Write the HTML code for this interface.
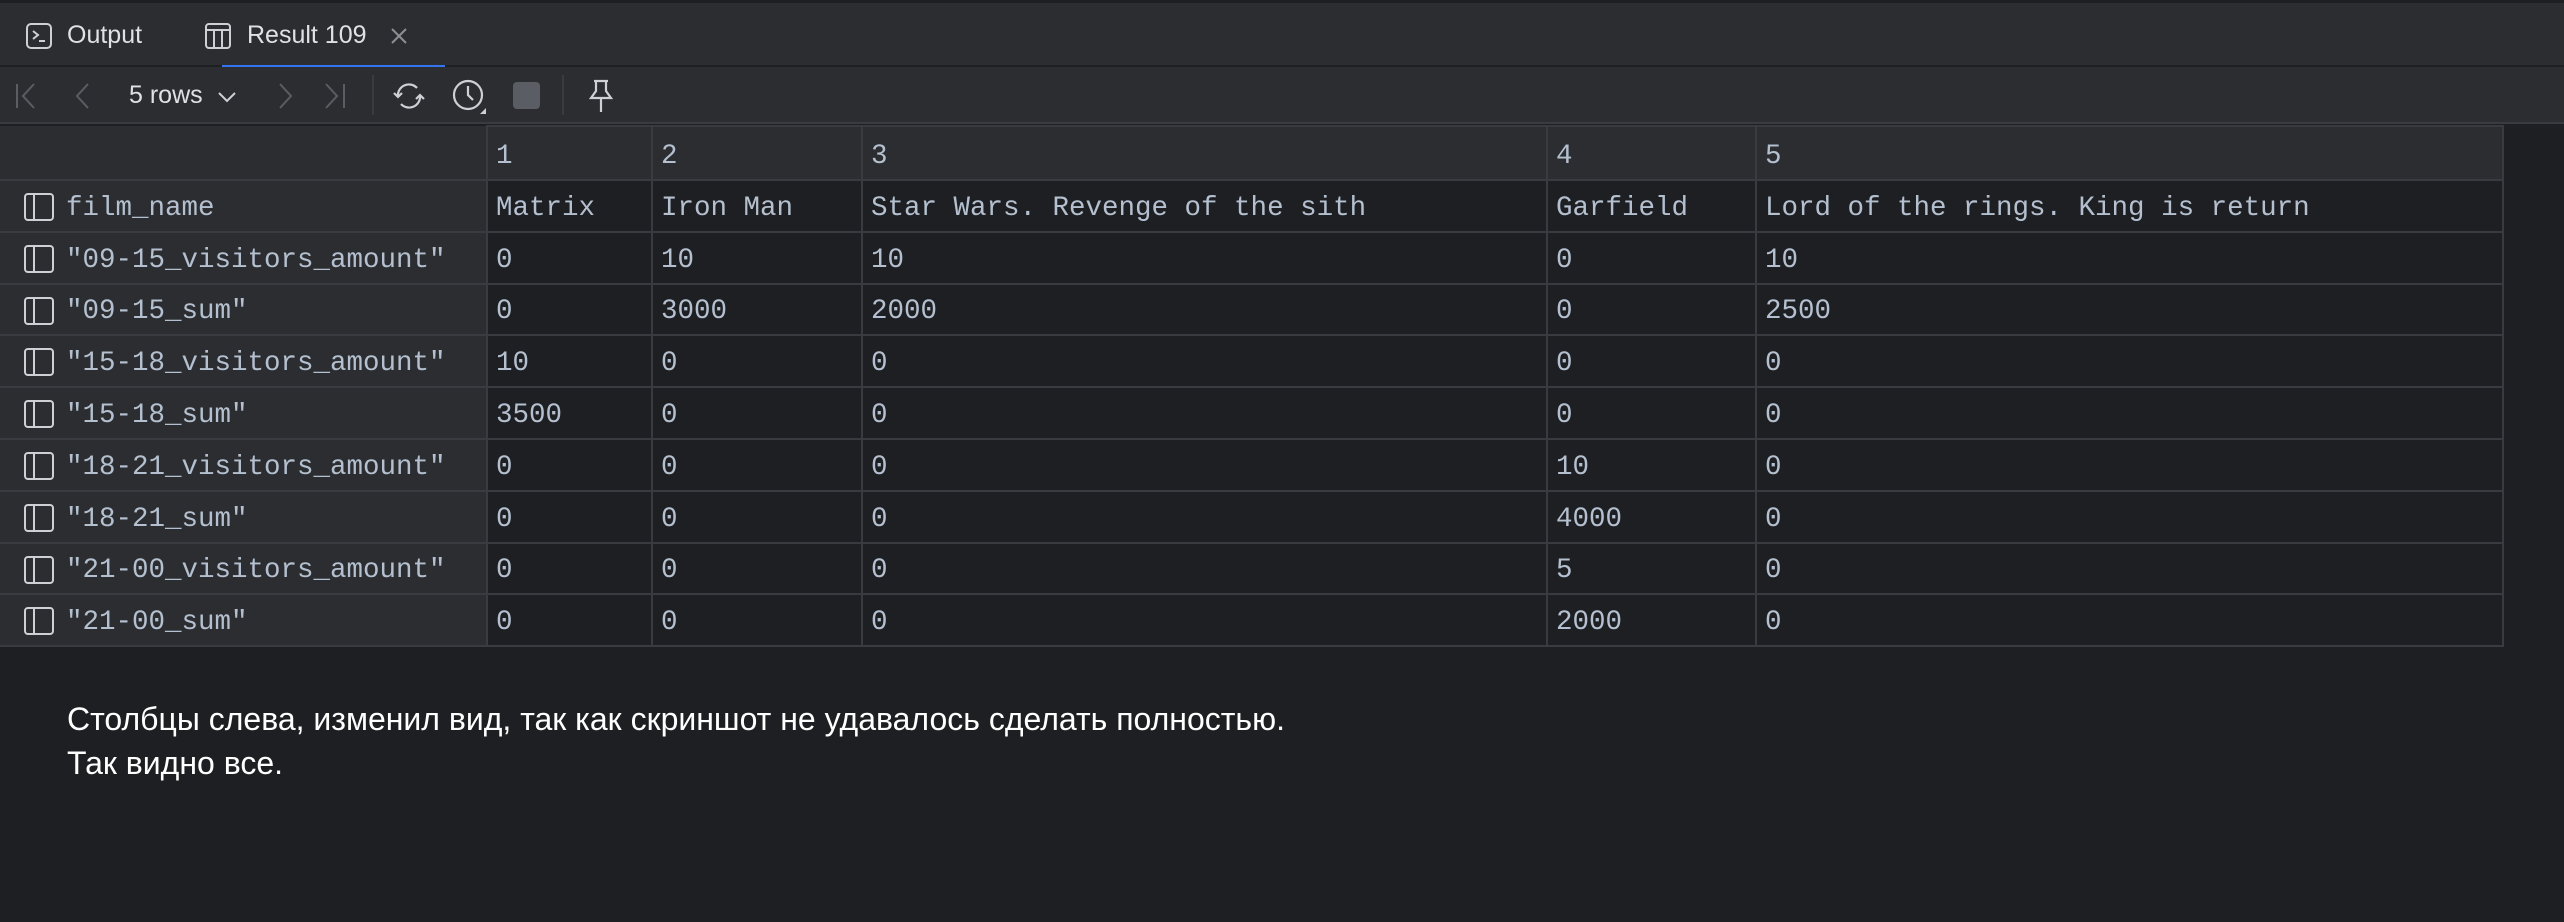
<!DOCTYPE html>
<html><head><meta charset="utf-8"><style>
*{margin:0;padding:0;box-sizing:border-box}
body{width:2564px;height:922px;background:#1e1f22;overflow:hidden;font-family:"Liberation Sans",sans-serif;position:relative}
.tabs{position:absolute;left:0;top:0;width:2564px;height:66px;background:#2b2d30;border-top:3px solid #1e1f22;border-bottom:1px solid #1e1f22}
.tab{position:absolute;top:18px;color:#dfe1e5;font-size:25px}
.ul{position:absolute;left:222px;top:62px;width:223px;height:4px;background:#3574f0}
.tb{position:absolute;left:0;top:67px;width:2564px;height:57px;background:#2b2d30;border-bottom:2px solid #393b40}
.sep{position:absolute;top:8px;width:2px;height:40px;background:#393b40}
table{position:absolute;left:0;top:125px;border-collapse:collapse;font-family:"Liberation Mono",monospace;font-size:27.5px;color:#b4c0cf}
td{height:51.8px;padding:5px 0 0 8px;border:2px solid #393b40;background:#1e1f22;white-space:nowrap;vertical-align:middle}
tr.h td{background:#2b2d30;height:54px;padding-top:6px}
td.l{background:#2b2d30;border-left:none;padding-left:66px;position:relative}
td.l svg{position:absolute;left:23px;top:11px}
tr.h td.l{border:none;border-bottom:2px solid #393b40}
.note{position:absolute;left:67px;top:697px;color:#ffffff;font-size:32px;line-height:44px}
</style></head><body>
<div class="tabs">
 <svg style="position:absolute;left:25px;top:19px" width="28" height="28" viewBox="0 0 28 28"><rect x="2" y="2" width="24" height="24" rx="4" fill="none" stroke="#ced0d6" stroke-width="2"/><path d="M8 9l5 4-5 4M14 19h6" stroke="#ced0d6" stroke-width="2" fill="none"/></svg>
 <div class="tab" style="left:67px">Output</div>
 <svg style="position:absolute;left:204px;top:19px" width="28" height="28" viewBox="0 0 28 28"><rect x="2" y="2" width="24" height="24" rx="3" fill="none" stroke="#ced0d6" stroke-width="2"/><path d="M2 8h24M10 8v18M18 8v18" stroke="#ced0d6" stroke-width="2"/></svg>
 <div class="tab" style="left:247px">Result 109</div>
 <svg style="position:absolute;left:390px;top:24px" width="18" height="18" viewBox="0 0 18 18"><path d="M2 2l14 14M16 2L2 16" stroke="#8c8f94" stroke-width="2"/></svg>
 <div class="ul"></div>
</div>
<div class="tb">
 <svg style="position:absolute;left:12px;top:14px" width="30" height="30" viewBox="0 0 30 30"><path d="M5 3v24M22 3L11 15l11 12" stroke="#5a5d63" stroke-width="2" fill="none"/></svg>
 <svg style="position:absolute;left:70px;top:14px" width="30" height="30" viewBox="0 0 30 30"><path d="M18 3L7 15l11 12" stroke="#5a5d63" stroke-width="2" fill="none"/></svg>
 <div style="position:absolute;left:129px;top:14px;color:#dfe1e5;font-size:25px">5 rows</div>
 <svg style="position:absolute;left:216px;top:22px" width="22" height="16" viewBox="0 0 22 16"><path d="M3 4l8 8 8-8" stroke="#ced0d6" stroke-width="2" fill="none"/></svg>
 <svg style="position:absolute;left:270px;top:14px" width="30" height="30" viewBox="0 0 30 30"><path d="M10 3l11 12-11 12" stroke="#5a5d63" stroke-width="2" fill="none"/></svg>
 <svg style="position:absolute;left:320px;top:14px" width="30" height="30" viewBox="0 0 30 30"><path d="M6 3l11 12L6 27M24 3v24" stroke="#5a5d63" stroke-width="2" fill="none"/></svg>
 <div class="sep" style="left:372px"></div>
 <svg style="position:absolute;left:390px;top:10px" width="38" height="38" viewBox="0 0 38 38"><path d="M8 20a11 11 0 0 1 19-9M30 18a11 11 0 0 1-19 9M4 16l4 4 4-4M26 22l4-4 4 4" stroke="#ced0d6" stroke-width="2.2" fill="none"/></svg>
 <svg style="position:absolute;left:450px;top:9px" width="40" height="40" viewBox="0 0 40 40"><circle cx="18" cy="19" r="14" fill="none" stroke="#ced0d6" stroke-width="2.2"/><path d="M18 10v9l5 5" stroke="#ced0d6" stroke-width="2.2" fill="none"/><path d="M36 32v6h-6z" fill="#ced0d6"/></svg>
 <div style="position:absolute;left:513px;top:15px;width:27px;height:27px;border-radius:4px;background:#5a5d63"></div>
 <div class="sep" style="left:562px"></div>
 <svg style="position:absolute;left:584px;top:10px" width="34" height="38" viewBox="0 0 34 38"><path d="M10 4h14M12 4v10l-5 7h20l-5-7V4M17 21v14" stroke="#ced0d6" stroke-width="2.2" fill="none"/></svg>
</div>
<table>
<colgroup><col style="width:487px"><col style="width:165px"><col style="width:210px"><col style="width:685px"><col style="width:209px"><col style="width:747px"></colgroup>
<tr class="h"><td class="l"></td><td>1</td><td>2</td><td>3</td><td>4</td><td>5</td></tr>
<tr><td class="l"><svg width="32" height="30" viewBox="0 0 32 30"><rect x="2" y="2" width="28" height="26" rx="3" fill="none" stroke="#ced0d6" stroke-width="2"/><path d="M11 2v26" stroke="#ced0d6" stroke-width="2"/></svg>film_name</td><td>Matrix</td><td>Iron Man</td><td>Star Wars. Revenge of the sith</td><td>Garfield</td><td>Lord of the rings. King is return</td></tr>
<tr><td class="l"><svg width="32" height="30" viewBox="0 0 32 30"><rect x="2" y="2" width="28" height="26" rx="3" fill="none" stroke="#ced0d6" stroke-width="2"/><path d="M11 2v26" stroke="#ced0d6" stroke-width="2"/></svg>"09-15_visitors_amount"</td><td>0</td><td>10</td><td>10</td><td>0</td><td>10</td></tr>
<tr><td class="l"><svg width="32" height="30" viewBox="0 0 32 30"><rect x="2" y="2" width="28" height="26" rx="3" fill="none" stroke="#ced0d6" stroke-width="2"/><path d="M11 2v26" stroke="#ced0d6" stroke-width="2"/></svg>"09-15_sum"</td><td>0</td><td>3000</td><td>2000</td><td>0</td><td>2500</td></tr>
<tr><td class="l"><svg width="32" height="30" viewBox="0 0 32 30"><rect x="2" y="2" width="28" height="26" rx="3" fill="none" stroke="#ced0d6" stroke-width="2"/><path d="M11 2v26" stroke="#ced0d6" stroke-width="2"/></svg>"15-18_visitors_amount"</td><td>10</td><td>0</td><td>0</td><td>0</td><td>0</td></tr>
<tr><td class="l"><svg width="32" height="30" viewBox="0 0 32 30"><rect x="2" y="2" width="28" height="26" rx="3" fill="none" stroke="#ced0d6" stroke-width="2"/><path d="M11 2v26" stroke="#ced0d6" stroke-width="2"/></svg>"15-18_sum"</td><td>3500</td><td>0</td><td>0</td><td>0</td><td>0</td></tr>
<tr><td class="l"><svg width="32" height="30" viewBox="0 0 32 30"><rect x="2" y="2" width="28" height="26" rx="3" fill="none" stroke="#ced0d6" stroke-width="2"/><path d="M11 2v26" stroke="#ced0d6" stroke-width="2"/></svg>"18-21_visitors_amount"</td><td>0</td><td>0</td><td>0</td><td>10</td><td>0</td></tr>
<tr><td class="l"><svg width="32" height="30" viewBox="0 0 32 30"><rect x="2" y="2" width="28" height="26" rx="3" fill="none" stroke="#ced0d6" stroke-width="2"/><path d="M11 2v26" stroke="#ced0d6" stroke-width="2"/></svg>"18-21_sum"</td><td>0</td><td>0</td><td>0</td><td>4000</td><td>0</td></tr>
<tr><td class="l"><svg width="32" height="30" viewBox="0 0 32 30"><rect x="2" y="2" width="28" height="26" rx="3" fill="none" stroke="#ced0d6" stroke-width="2"/><path d="M11 2v26" stroke="#ced0d6" stroke-width="2"/></svg>"21-00_visitors_amount"</td><td>0</td><td>0</td><td>0</td><td>5</td><td>0</td></tr>
<tr><td class="l"><svg width="32" height="30" viewBox="0 0 32 30"><rect x="2" y="2" width="28" height="26" rx="3" fill="none" stroke="#ced0d6" stroke-width="2"/><path d="M11 2v26" stroke="#ced0d6" stroke-width="2"/></svg>"21-00_sum"</td><td>0</td><td>0</td><td>0</td><td>2000</td><td>0</td></tr>
</table>
<div class="note">Столбцы слева, изменил вид, так как скриншот не удавалось сделать полностью.<br>Так видно все.</div>
</body></html>
